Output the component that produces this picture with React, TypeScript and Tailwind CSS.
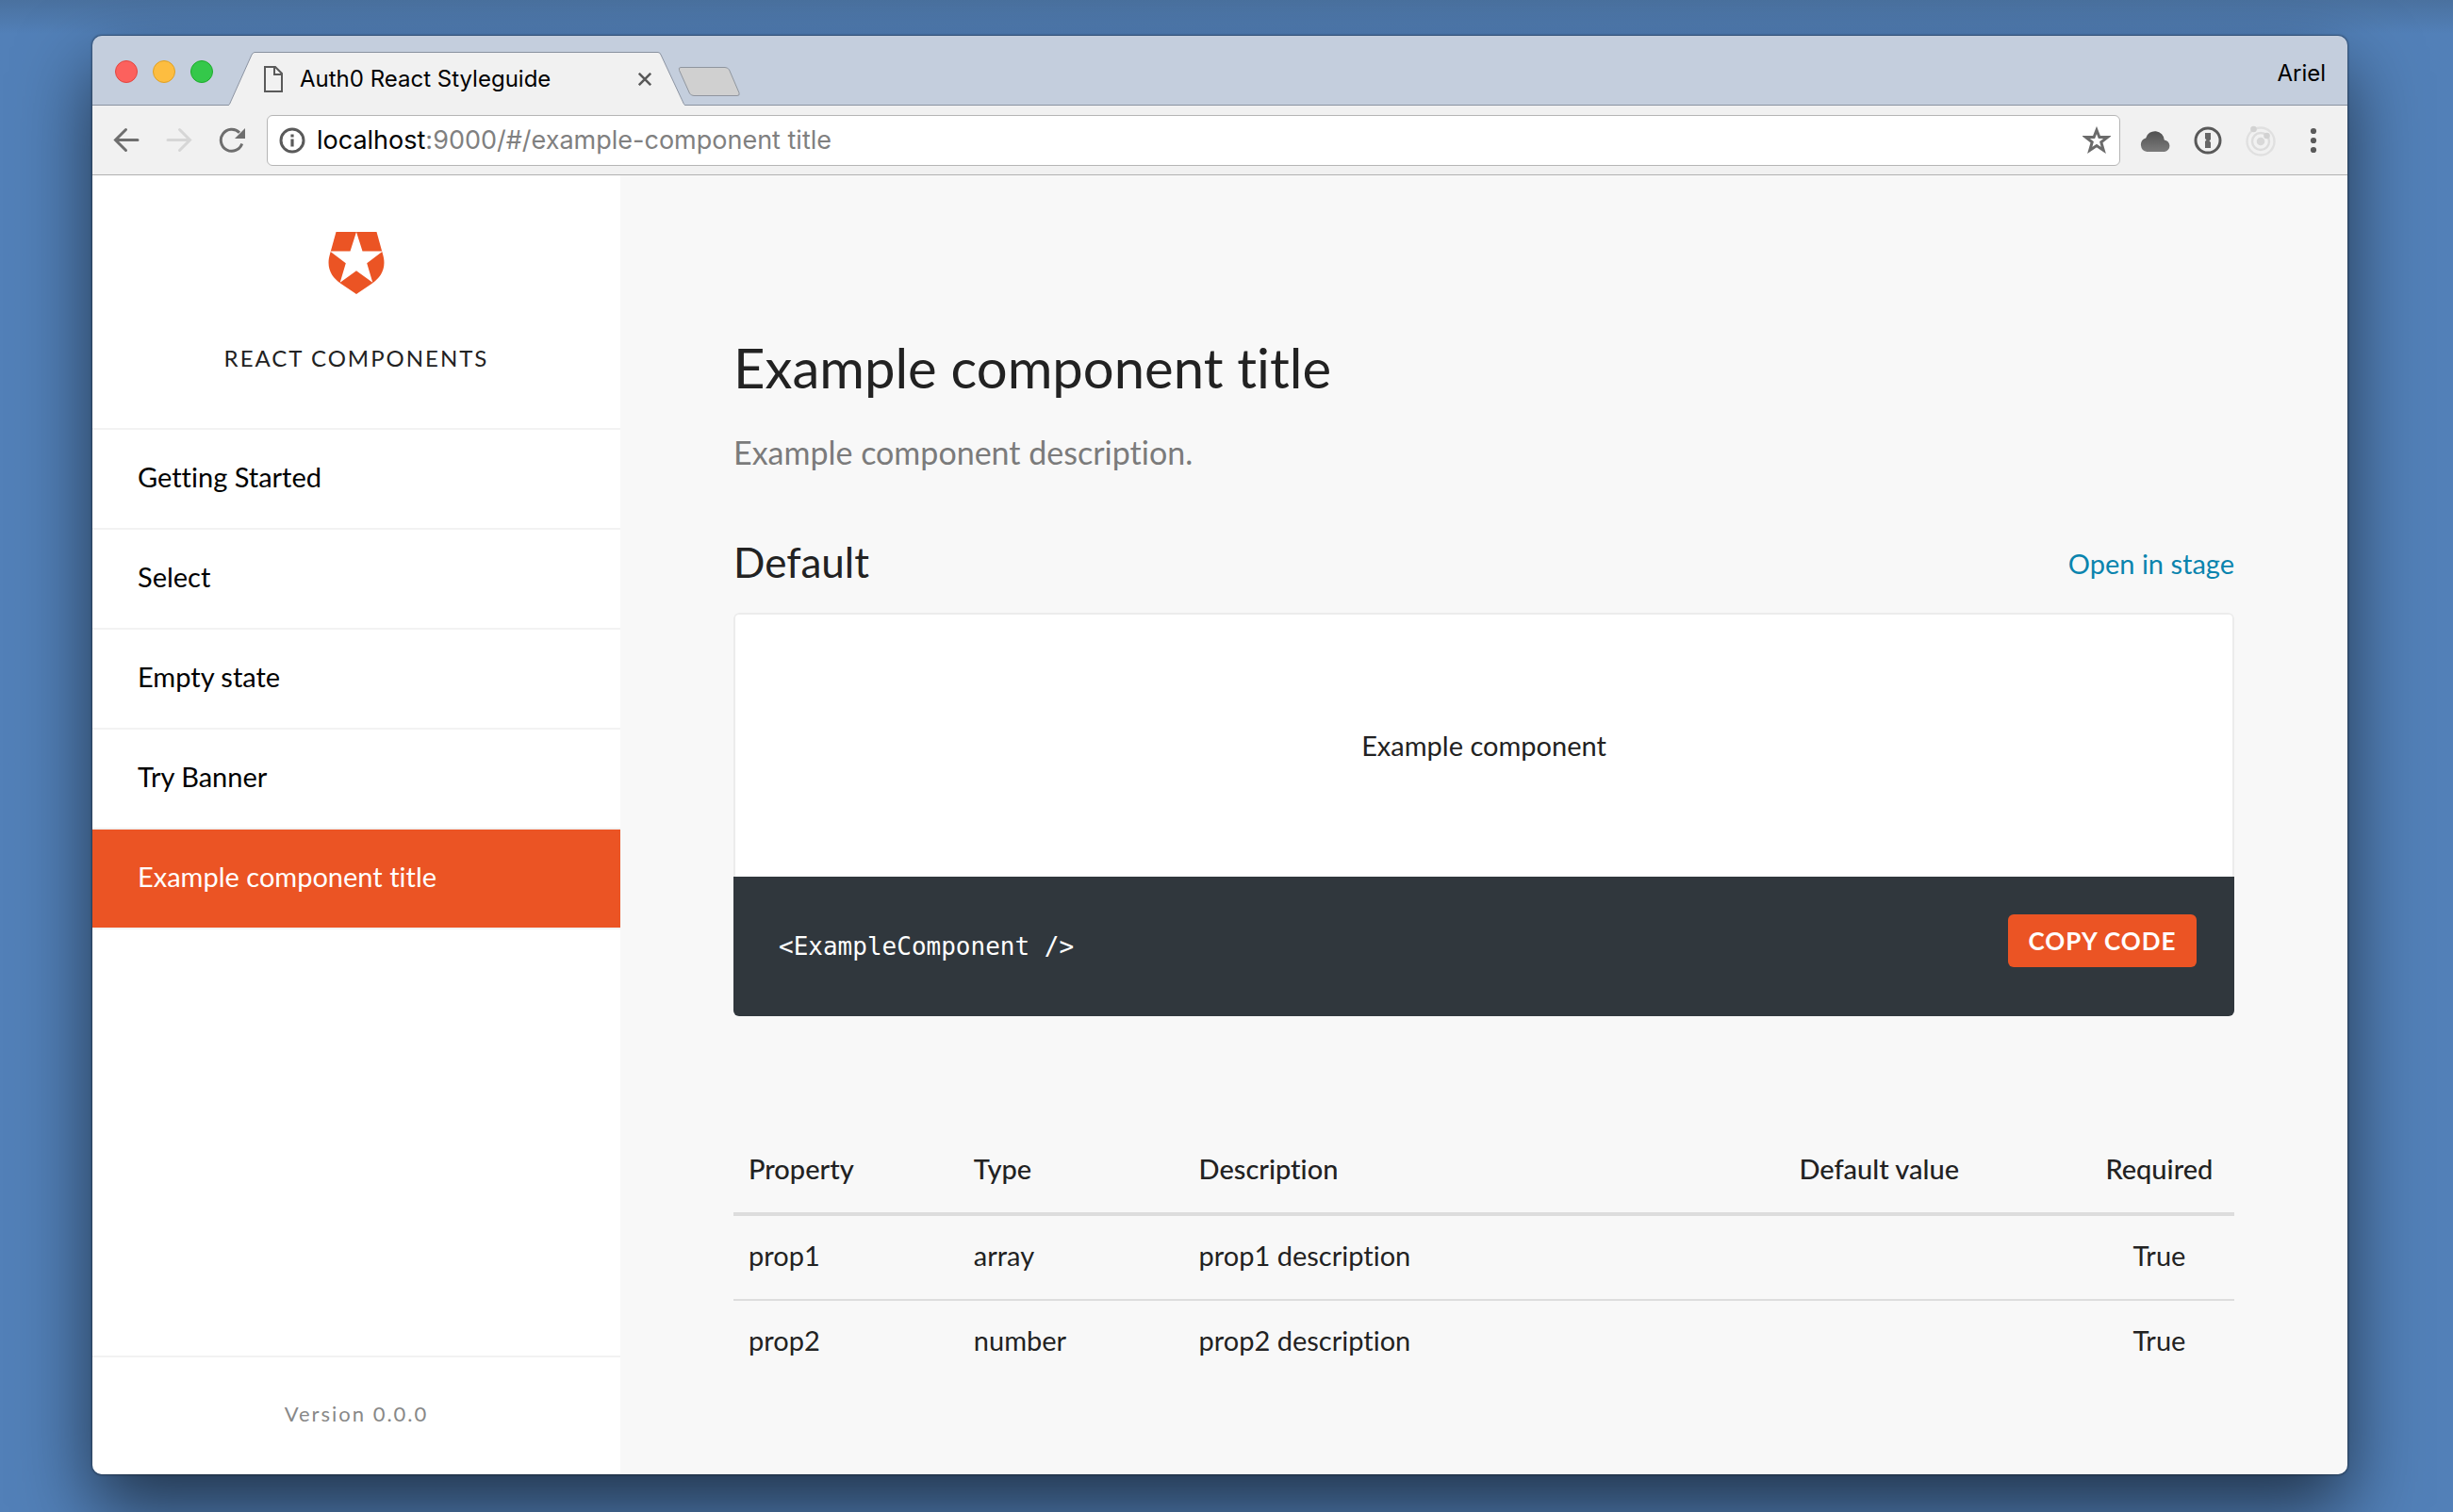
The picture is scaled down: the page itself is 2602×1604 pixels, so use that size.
type Prop = { name: string; type: string; description: string; defaultValue: string; required: string };

const navItems = ["Getting Started", "Select", "Empty state", "Try Banner", "Example component title"];

const props: Prop[] = [
  { name: "prop1", type: "array", description: "prop1 description", defaultValue: "", required: "True" },
  { name: "prop2", type: "number", description: "prop2 description", defaultValue: "", required: "True" },
];

function TabStrip() {
  return (
    <div className="flex h-[74px] items-end border-b border-[#8a92a0] bg-[#c4cedd] pl-6 pr-[23px] font-['Inter',sans-serif] text-2xl text-black">
      <div className="mt-[26px] flex gap-4 self-start">
        <button aria-label="Close window" className="size-6 rounded-full border border-[#e2463f] bg-[#fc615d]" />
        <button aria-label="Minimize window" className="size-6 rounded-full border border-[#dfa023] bg-[#fdbd40]" />
        <button aria-label="Zoom window" className="size-6 rounded-full border border-[#1dac2b] bg-[#34c84a]" />
      </div>

      <div className="relative -mb-px ml-4 flex h-[57px] w-[485px] items-center pl-[38px] pr-[31px]">
        <svg className="absolute inset-0" width="485" height="57" viewBox="0 0 485 57" fill="none" aria-hidden="true">
          <path d="M0 57L1 56L25 3Q26.500 .5 28 .5H456Q458 .5 459 3L484 56L485 57Z" fill="#f1f1f1" />
          <path d="M0 56.500Q1 56.500 1.500 55.500L25 3Q26.500 .5 28 .5H456Q458 .5 459 3L483.500 55.500Q484 56.500 485 56.500" stroke="#8a92a0" />
        </svg>
        <svg className="relative" width="20" height="28" viewBox="0 0 20 28" fill="none" stroke="#5a5a5a" strokeWidth="2" aria-hidden="true">
          <path d="M1 1H12L19 8V27H1Z" />
          <path d="M11 1V9H19" />
        </svg>
        <span className="relative ml-[18px] flex-1 whitespace-nowrap">Auth0 React Styleguide</span>
        <button aria-label="Close tab" className="relative flex size-6 items-center justify-center">
          <svg width="14" height="14" viewBox="0 0 14 14" stroke="#5a5a5a" strokeWidth="2.500" aria-hidden="true">
            <path d="M.8 .8L13.200 13.200M13.200 .8L.8 13.200" />
          </svg>
        </button>
      </div>

      <button aria-label="New tab" className="-ml-2 mb-2">
        <svg width="67" height="32" viewBox="0 0 67 32" fill="#d0d0d0" stroke="#8f959e" aria-hidden="true">
          <path d="M3 .5H50Q53 .5 54.500 3L65 27.500Q66 30.500 63 30.500H17Q14 30.500 12.500 28L1.500 3.500Q.5 .5 3 .5Z" />
        </svg>
      </button>

      <button className="ml-auto mt-6 self-start leading-8">Ariel</button>
    </div>
  );
}

const toolButton = "flex h-14 w-14 shrink-0 items-center justify-center";

function Toolbar() {
  return (
    <div className="flex h-[74px] items-center border-b border-[#b1b1b1] bg-[#f1f1f1] px-2">
      <button aria-label="Back" className={toolButton}>
        <svg width="28" height="28" viewBox="0 0 28 28" fill="none" stroke="#6e6e6e" strokeWidth="3" strokeLinecap="round" aria-hidden="true">
          <path d="M13.500 2.500L2.500 13.500L13.500 24.500M3 13.500H26" />
        </svg>
      </button>
      <button aria-label="Forward" disabled className={toolButton}>
        <svg width="28" height="28" viewBox="0 0 28 28" fill="none" stroke="#d6d6d6" strokeWidth="3" strokeLinecap="round" aria-hidden="true">
          <path d="M14.500 2.500L25.500 13.500L14.500 24.500M25 13.500H2" />
        </svg>
      </button>
      <button aria-label="Reload" className={toolButton}>
        <svg width="28" height="28" viewBox="0 0 28 28" fill="none" aria-hidden="true">
          <path d="M24.700 17.500A11.500 11.500 0 1 1 22 5.700" stroke="#6e6e6e" strokeWidth="3" />
          <path d="M28 1V12H17Z" fill="#6e6e6e" />
        </svg>
      </button>

      <form className="ml-[9px] flex h-[54px] flex-1 items-center rounded-md border border-[#b5b5b5] bg-white pl-3 pr-2">
        <svg width="28" height="28" viewBox="0 0 28 28" fill="none" aria-hidden="true">
          <circle cx="14" cy="14" r="12" stroke="#5a5a5a" strokeWidth="3" />
          <path d="M14 12.500V20.500M14 7.500V10.500" stroke="#5a5a5a" strokeWidth="3.200" />
        </svg>
        <a href="#/example-component" className="ml-3 flex-1 whitespace-nowrap font-['Inter',sans-serif] text-[27px] leading-8 text-[#808080]">
          <span className="text-black">localhost</span>:9000/#/example-component title
        </a>
        <button type="button" aria-label="Bookmark this page" className="flex size-8 items-center justify-center">
          <svg width="30" height="30" viewBox="0 0 30 30" fill="none" stroke="#6b6b6b" strokeWidth="3" aria-hidden="true">
            <path d="M15 4L17.900 11.500H26.500L19.800 16.800L22.300 25.500L15 20.500L7.700 25.500L10.200 16.800L3.500 11.500H12.100Z" />
          </svg>
        </button>
      </form>

      <div className="ml-[9px] flex">
        <button aria-label="Cloud extension" className={toolButton}>
          <svg width="32" height="24" viewBox="0 0 32 24" aria-hidden="true">
            <defs>
              <linearGradient id="cloud" x1="0" y1="0" x2="0" y2="1">
                <stop offset="0" stopColor="#505050" />
                <stop offset="1" stopColor="#7b7b7b" />
              </linearGradient>
            </defs>
            <path d="M7.500 24A7.500 7.500 0 0 1 6.200 9.400A10 10 0 0 1 25.800 11.500A6.300 6.300 0 0 1 26 24Z" fill="url(#cloud)" />
          </svg>
        </button>
        <button aria-label="Password manager" className={toolButton}>
          <svg width="30" height="30" viewBox="0 0 30 30" fill="none" aria-hidden="true">
            <circle cx="15" cy="15" r="13" stroke="#595959" strokeWidth="3" />
            <path d="M12 7H18V14L16.500 15.500L18 17V23H12V16L13.500 14.500L12 13Z" fill="#666666" />
          </svg>
        </button>
        <button aria-label="Orbit extension" className={toolButton}>
          <svg width="32" height="34" viewBox="0 0 32 34" fill="none" aria-hidden="true">
            <circle cx="16" cy="18" r="14.500" stroke="#e0e0e0" strokeWidth="2.400" />
            <circle cx="16" cy="18" r="9" stroke="#dcdcdc" strokeWidth="2.400" />
            <circle cx="16" cy="18" r="4.300" fill="#d8d8d8" />
            <circle cx="8.500" cy="5" r="3.300" fill="#d2d2d2" />
            <circle cx="22.500" cy="12" r="3.300" fill="#d2d2d2" />
          </svg>
        </button>
        <button aria-label="Menu" className={toolButton}>
          <svg width="8" height="28" viewBox="0 0 8 28" fill="#5a5a5a" aria-hidden="true">
            <circle cx="4" cy="4" r="3.100" />
            <circle cx="4" cy="14" r="3.100" />
            <circle cx="4" cy="24" r="3.100" />
          </svg>
        </button>
      </div>
    </div>
  );
}

function Logo() {
  return (
    <svg width="60" height="66" viewBox="0 0 60 66" aria-hidden="true">
      <path d="M8.500 0H51.500L58 23.500C62.500 38.500 56 48 47 54.500L30 66L13 54.500C4 48 -2.500 38.500 2 23.500Z" fill="#eb5424" />
      <path d="M30 0L36.500 20.500H58L41.200 33.200L47.300 53.700L30 41.200L12.700 53.700L18.800 33.200L2 20.500H23.500Z" fill="#fff" />
    </svg>
  );
}

function Sidebar() {
  return (
    <aside className="flex w-[560px] shrink-0 flex-col bg-white">
      <header className="flex flex-col items-center border-b-2 border-[#f2f2f2] pb-14 pt-15">
        <Logo />
        <p className="mt-[50px] text-2xl/9 tracking-[2px] text-[#222222]">REACT COMPONENTS</p>
      </header>
      <nav>
        {navItems.map((item) => (
          <a
            key={item}
            href="#"
            aria-current={item === "Example component title" ? "page" : undefined}
            className="block border-b-2 border-[#f2f2f2] px-12 pb-[34px] pt-[30px] text-[29px]/10 text-black aria-[current=page]:bg-[#eb5424] aria-[current=page]:bg-clip-padding aria-[current=page]:text-white"
          >
            {item}
          </a>
        ))}
      </nav>
      <footer className="mt-auto border-t-2 border-[#f2f2f2] pb-12 pt-11 text-center text-[22px]/8 tracking-[2px] text-[#888888]">
        Version 0.0.0
      </footer>
    </aside>
  );
}

const cell = "pb-7 pt-6 px-4";

function Main() {
  return (
    <main className="flex-1 bg-[#f8f8f8] px-30 pt-[164px] text-[#222222]">
      <h1 className="text-[58px]/20">Example component title</h1>
      <p className="mt-[26px] text-[34px]/12 text-[#7b7b7b]">Example component description.</p>

      <section className="mt-16">
        <div className="flex items-end justify-between">
          <h2 className="text-[44px]/14">Default</h2>
          <a href="#" className="pb-1 text-[29px]/11">Open in stage</a>
        </div>
        <div className="mt-[26px] overflow-hidden rounded-md">
          <div className="flex h-[280px] items-center justify-center rounded-t-md border-x-2 border-t-2 border-[#ececec] bg-white text-[29px]/10">
            Example component
          </div>
          <div className="flex items-start justify-between bg-[#30373d] pb-13 pl-12 pr-10 pt-10 text-white">
            <code className="mt-[14px] font-['DejaVu_Sans_Mono',monospace] text-[26px]/10">{"<ExampleComponent />"}</code>
            <button className="h-14 w-[200px] rounded-md bg-[#eb5424] text-[26px]/8 font-bold tracking-[1px]">COPY CODE</button>
          </div>
        </div>
      </section>

      <table className="mt-30 w-full table-fixed border-separate border-spacing-0 text-left text-[29px]/9">
        <thead>
          <tr className="*:border-b-4 *:border-[#dddddd] *:font-medium">
            <th className={`${cell} w-[15%]`}>Property</th>
            <th className={`${cell} w-[15%]`}>Type</th>
            <th className={`${cell} w-[40%]`}>Description</th>
            <th className={`${cell} w-[20%]`}>Default value</th>
            <th className={`${cell} w-[10%] text-center`}>Required</th>
          </tr>
        </thead>
        <tbody>
          {props.map((p) => (
            <tr key={p.name} className="*:border-b-2 *:border-[#dddddd] last:*:border-b-0">
              <td className={cell}>{p.name}</td>
              <td className={cell}>{p.type}</td>
              <td className={cell}>{p.description}</td>
              <td className={cell}>{p.defaultValue}</td>
              <td className={`${cell} text-center`}>{p.required}</td>
            </tr>
          ))}
        </tbody>
      </table>
    </main>
  );
}

export default function App() {
  return (
    <div className="flex min-h-screen bg-[#5280b8] bg-linear-to-b from-[#4a719f] from-0% to-[#5280b8] to-[36px] pb-10 pl-[98px] pr-28 pt-[38px] font-['Lato',sans-serif] [font-variant-ligatures:none] [&_section_a]:text-[#0a84ae]">
      <div className="flex flex-1 flex-col overflow-hidden rounded-[10px] shadow-[0_0_2px_1px_rgba(0,0,0,0.35),0_36px_80px_rgba(0,0,0,0.6)]">
        <TabStrip />
        <Toolbar />
        <div className="flex flex-1">
          <Sidebar />
          <Main />
        </div>
      </div>
    </div>
  );
}
